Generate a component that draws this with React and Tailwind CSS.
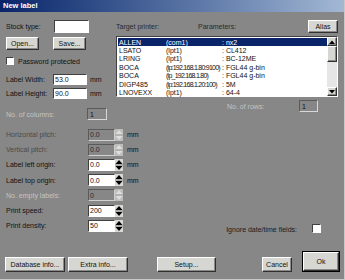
import React from 'react';

const printers = [
    { name: 'ALLEN', port: '(com1)', params: ': nx2', selected: true },
    { name: 'LSATO', port: '(lpt1)', params: ': CL412' },
    { name: 'LRING', port: '(lpt1)', params: ': BC-12ME' },
    { name: 'BOCA', port: '(ip:192.168.1.80:9100)', params: ': FGL44 g-bin', tight: true },
    { name: 'BOCA', port: '(ip_192.168.1.80)', params: ': FGL44 g-bin', tight: true },
    { name: 'DIGP485', port: '(ip:192.168.1.20:100)', params: ':  5M', tight: true },
    { name: 'LNOVEXX', port: '(lpt1)', params: ': 64-4' },
];

const fields = [
    { label: 'Horizontal pitch:', value: '0.0', disabled: true, dim: 'mid', mm: true },
    { label: 'Vertical pitch:', value: '0.0', disabled: true, dim: 'mid', mm: true },
    { label: 'Label left origin:', value: '0.0', mm: true },
    { label: 'Label top origin:', value: '0.0', mm: true },
    { label: 'No. empty labels:', value: '0', disabled: true, dim: 'light' },
    { label: 'Print speed:', value: '200' },
    { label: 'Print density:', value: '50' },
];

const raised = 'bg-[#d6d6d2] border border-t-white border-l-white border-r-[#303030] border-b-[#303030] shadow-[inset_-1px_-1px_0_#8a8a8a]';
const sunken = 'border border-t-[#404040] border-l-[#404040] border-r-white border-b-white';

function Button({ children, className = '' }) {
    return (
        <div className={`${raised} flex items-center justify-center ${className}`}>
            {children}
        </div>
    );
}

function Spinner({ disabled }) {
    const bg = disabled ? '#bdbdbb' : '#d8d8d4';
    const fg = disabled ? '#dedede' : '#000';
    return (
        <svg width="8" height="12" viewBox="0 0 8 12" className="shrink-0">
            <rect x="0" y="0" width="8" height="12" fill={bg} />
            <line x1="0" y1="6" x2="8" y2="6" stroke={disabled ? '#a8a8a8' : '#808080'} strokeWidth="1" />
            <polygon points="4,1 7.5,5 0.5,5" fill={fg} />
            <polygon points="0.5,7 7.5,7 4,11" fill={fg} />
        </svg>
    );
}

function ScrollArrow({ down }) {
    return (
        <div className={`${raised} w-[10px] h-[9px] flex items-center justify-center`}>
            <svg width="6" height="4" viewBox="0 0 6 4">
                <polygon points={down ? '0,0 6,0 3,3.5' : '3,0.5 6,4 0,4'} fill="#000" />
            </svg>
        </div>
    );
}

export default function App() {
    return (
        <div className="w-[345px] h-[280px] bg-[#878787] flex flex-col font-['Liberation_Sans',Arial,sans-serif] text-[7px] leading-none text-[#111] border-r border-b border-[#c8c8c8] overflow-hidden">
            <div className="h-[12px] shrink-0 bg-gradient-to-r from-[#0a246a] to-[#a3b8d4] flex items-center pl-[3px] text-white font-bold text-[7.5px]">
                New label
            </div>

            <div className="flex pt-[8px]">
                {/* left column */}
                <div className="w-[110px] pl-[6px] flex flex-col">
                    <div className="flex items-center h-[13px]">
                        <span className="w-[48px]">Stock type:</span>
                        <div className={`${sunken} bg-white w-[35px] h-[13px]`}></div>
                    </div>
                    <div className="flex mt-[4px]">
                        <Button className="w-[33px] h-[13px]">Open...</Button>
                        <Button className="w-[33px] h-[13px] ml-[14px]">Save...</Button>
                    </div>
                    <div className="flex items-center mt-[7px] h-[8px]">
                        <div className={`${sunken} bg-white w-[8px] h-[8px]`}></div>
                        <span className="ml-[4px]">Password protected</span>
                    </div>
                    <div className="flex items-center mt-[9px] h-[11px]">
                        <span className="w-[47px]">Label Width:</span>
                        <div className={`${sunken} bg-white w-[34px] h-[11px] flex items-center pl-[1px]`}>53.0</div>
                        <span className="ml-[3px]">mm</span>
                    </div>
                    <div className="flex items-center mt-[3px] h-[11px]">
                        <span className="w-[47px]">Label Height:</span>
                        <div className={`${sunken} bg-white w-[34px] h-[11px] flex items-center pl-[1px]`}>90.0</div>
                        <span className="ml-[3px]">mm</span>
                    </div>
                    <div className="flex items-center mt-[9px] h-[12px]">
                        <span className="w-[81px] text-[#c4c4c4]">No. of columns:</span>
                        <div className="border border-t-[#5a5a5a] border-l-[#5a5a5a] border-r-[#d8d8d8] border-b-[#d8d8d8] w-[20px] h-[12px] flex items-center pl-[2px]">1</div>
                    </div>
                </div>

                {/* right column */}
                <div className="ml-[6px] w-[222px] flex flex-col">
                    <div className="flex items-center h-[13px]">
                        <span className="w-[82px] text-[#2a2a2a]">Target printer:</span>
                        <span className="text-[#2a2a2a]">Parameters:</span>
                        <Button className="w-[30px] h-[13px] ml-auto">Alias</Button>
                    </div>
                    <div className={`${sunken} bg-white mt-[3px] h-[61px] flex`}>
                        <div className="flex-1 pt-[1px] pl-[1px]">
                            {printers.map((p, i) => (
                                <div
                                    key={i}
                                    className={`flex items-center h-[8.4px] pl-[1px] whitespace-nowrap ${p.selected ? 'bg-[#0a246a] text-white' : 'text-[#111]'}`}
                                >
                                    <span className="w-[47px]">{p.name}</span>
                                    <span className={`w-[56px] ${p.tight ? 'tracking-[-0.75px]' : ''}`}>{p.port}</span>
                                    <span>{p.params}</span>
                                </div>
                            ))}
                        </div>
                        <div className="w-[10px] bg-[#e6e6e6] flex flex-col">
                            <ScrollArrow />
                            <div className={`${raised} w-[10px] h-[16px]`}></div>
                            <div className="flex-1"></div>
                            <ScrollArrow down />
                        </div>
                    </div>
                    <div className="flex items-center mt-[3px] h-[12px]">
                        <span className="ml-[111px] w-[72px] text-[#c4c4c4]">No. of rows:</span>
                        <div className="border border-t-[#5a5a5a] border-l-[#5a5a5a] border-r-[#d8d8d8] border-b-[#d8d8d8] w-[19px] h-[12px] flex items-center pl-[2px]">1</div>
                    </div>
                </div>
            </div>

            {/* lower fields */}
            <div className="flex mt-[7px]">
                <div className="pl-[6px] flex flex-col">
                    {fields.map((f, i) => (
                        <div key={i} className="flex items-center h-[15.2px]">
                            <span className={`w-[82px] ${f.dim === 'light' ? 'text-[#c4c4c4]' : f.dim === 'mid' ? 'text-[#4a4a4a]' : ''}`}>{f.label}</span>
                            <div
                                className={`w-[27px] h-[12px] flex items-center pl-[1px] ${f.disabled
                                    ? 'border border-t-[#5a5a5a] border-l-[#5a5a5a] border-r-[#d0d0d0] border-b-[#d0d0d0] text-[#2a2a2a]'
                                    : `${sunken} bg-white`
                                    }`}
                            >
                                {f.value}
                            </div>
                            <Spinner disabled={f.disabled} />
                            {f.mm && <span className="ml-[4px]">mm</span>}
                        </div>
                    ))}
                </div>
                <div className="flex-1 flex items-end justify-end pb-[0px] pr-[23px]">
                    <span className="text-[#1a1a1a]">Ignore date/time fields:</span>
                    <div className={`${sunken} bg-white w-[9px] h-[9px] ml-[15px]`}></div>
                </div>
            </div>

            {/* bottom buttons */}
            <div className="flex items-end mt-auto pl-[5px] pb-[7px]">
                <Button className="w-[60px] h-[15px]">Database info...</Button>
                <Button className="w-[60px] h-[15px] ml-[3px]">Extra info...</Button>
                <Button className="w-[59px] h-[15px] ml-[29px]">Setup...</Button>
                <Button className="w-[30px] h-[15px] ml-[46px]">Cancel</Button>
                <div className="ml-[10px] w-[38px] h-[21px] border border-black">
                    <div className={`${raised} w-full h-full flex justify-center pt-[5px]`}>Ok</div>
                </div>
            </div>
        </div>
    );
}
